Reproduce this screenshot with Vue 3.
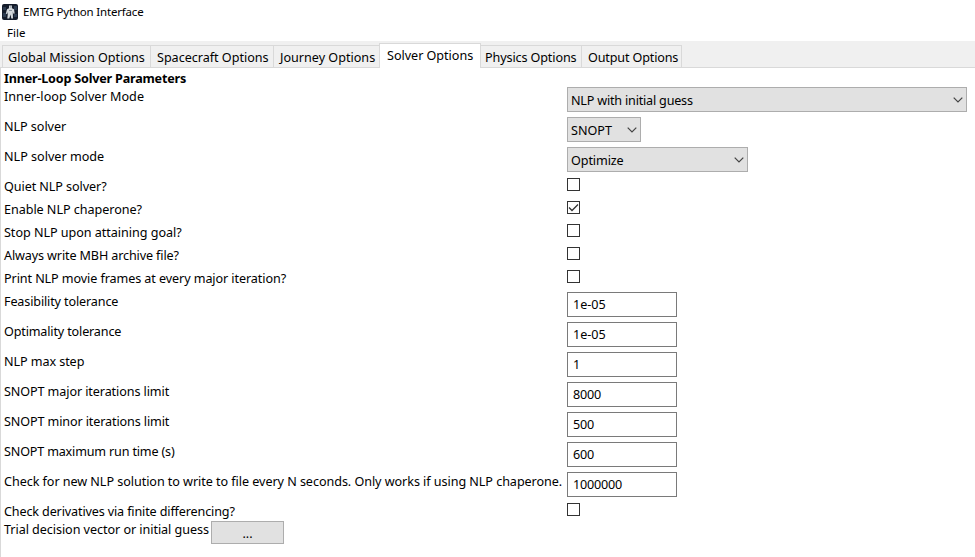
<script setup>
const tabs = [
  { name: 'Global Mission Options', w: 148, pad: 5, ls: 0 },
  { name: 'Spacecraft Options', w: 123, pad: 6, ls: -0.02 },
  { name: 'Journey Options', w: 106, pad: 6, ls: 0 },
  { name: 'Solver Options', w: 102, pad: 7, ls: -0.03, active: true },
  { name: 'Physics Options', w: 101, pad: 4, ls: -0.12 },
  { name: 'Output Options', w: 101, pad: 6, ls: -0.15 },
]
const rows = [
  { label: 'Inner-loop Solver Mode', ls: 0.03, type: 'select', value: 'NLP with initial guess', vls: -0.2, w: 400 },
  { label: 'NLP solver', ls: -0.05, type: 'select', value: 'SNOPT', w: 74 },
  { label: 'NLP solver mode', ls: 0, type: 'select', value: 'Optimize', vls: -0.1, w: 181 },
  { label: 'Quiet NLP solver?', ls: -0.08, type: 'check' },
  { label: 'Enable NLP chaperone?', ls: -0.05, type: 'check', value: true },
  { label: 'Stop NLP upon attaining goal?', ls: -0.04, type: 'check' },
  { label: 'Always write MBH archive file?', ls: -0.13, type: 'check' },
  { label: 'Print NLP movie frames at every major iteration?', ls: -0.09, type: 'check' },
  { label: 'Feasibility tolerance', ls: -0.14, type: 'input', value: '1e-05' },
  { label: 'Optimality tolerance', ls: -0.16, type: 'input', value: '1e-05' },
  { label: 'NLP max step', ls: -0.08, type: 'input', value: '1' },
  { label: 'SNOPT major iterations limit', ls: -0.1, type: 'input', value: '8000', vls: -0.2 },
  { label: 'SNOPT minor iterations limit', ls: -0.12, type: 'input', value: '500', vls: -0.2 },
  { label: 'SNOPT maximum run time (s)', ls: -0.18, type: 'input', value: '600', vls: -0.2 },
  { label: 'Check for new NLP solution to write to file every N seconds. Only works if using NLP chaperone.', ls: -0.056, type: 'input', value: '1000000', vls: -0.2 },
  { label: 'Check derivatives via finite differencing?', ls: -0.14, type: 'check', last: true },
]
const spacing = (v) => ({ letterSpacing: (v || 0) + 'px' })
</script>

<template>
  <div class="window">
    <header class="title">
      <svg class="logo" width="16" height="16" viewBox="0 0 16 16">
        <rect width="16" height="16" rx="2" fill="#141c2b" />
        <path d="M1 3h3v3H1zM12 2h3v4h-3zM1 9h3v4H1zM12 10h3v3h-3z" fill="#2c3b50" />
        <path d="M7 1.5h3v2.700l2 1 .7 4.300-1.300.300-.6-2.300.2 7H9.300L8.500 10.500 7.300 14.500H5.300L6 8 5 10.300 3.900 9.500 5 5.200 7 4.300z" fill="#d3d8dc" />
        <path d="M8 2.500h1.500v1H8zM7 6h3v1H7z" fill="#87919c" />
      </svg>
      <span>EMTG Python Interface</span>
    </header>
    <nav class="menu">File</nav>
    <div class="tabs">
      <div v-for="t in tabs" :key="t.name" class="tab" :class="{ active: t.active }" :style="{ width: t.w + 'px', paddingLeft: t.pad + 'px' }">
        <span :style="spacing(t.ls)">{{ t.name }}</span>
      </div>
    </div>
    <main class="page">
      <h1>Inner-Loop Solver Parameters</h1>
      <div v-for="r in rows" :key="r.label" class="row" :class="[r.type, { last: r.last }]">
        <div class="label"><span :style="spacing(r.ls)">{{ r.label }}</span></div>
        <div v-if="r.type === 'select'" class="combo" :style="{ width: r.w + 'px' }">
          <span class="choice" :style="spacing(r.vls)">{{ r.value }}</span>
          <svg width="10" height="6" viewBox="0 0 10 6"><path d="M.7.700 5 5 9.300.700" fill="none" stroke="#444" stroke-width="1.200" /></svg>
        </div>
        <div v-else-if="r.type === 'input'" class="field"><span :style="spacing(r.vls)">{{ r.value }}</span></div>
        <div v-else class="box">
          <svg v-if="r.value" width="11" height="11" viewBox="0 0 11 11"><path d="M1 5.500 4 8.500 10 2.500" fill="none" stroke="#333" stroke-width="1.300" /></svg>
        </div>
      </div>
      <div class="trial">
        <div class="label">Trial decision vector or initial guess</div>
        <div class="button">...</div>
      </div>
    </main>
  </div>
</template>

<style>
body { margin: 0; background: #fff; overflow: hidden; }
</style>

<style scoped>
* { box-sizing: border-box; }
.window { width: 975px; height: 557px; display: flex; flex-direction: column; font: 12.6px/18px "Noto Sans", sans-serif; color: #000; background: #fff; overflow: hidden; white-space: nowrap; }
.title { height: 24px; display: flex; align-items: center; padding-left: 2px; gap: 5px; font-size: 11.5px; letter-spacing: -0.18px; flex: none; }
.logo { margin-top: -1px; }
.menu { height: 17px; padding-left: 7px; font-size: 11.5px; flex: none; }
.tabs { height: 27px; flex: none; background: #f0f0f0; display: flex; align-items: flex-end; padding-left: 2px; box-shadow: inset 0 -1px #d9d9d9; }
.tab { height: 23px; border: 1px solid #d9d9d9; border-right: 0; padding-top: 3px; }
.tab:last-child { border-right: 1px solid #d9d9d9; }
.tab.active { height: 25px; background: #fff; border-bottom: 0; border-right: 1px solid #d9d9d9; margin-right: -1px; }
.page { flex: 1; border-left: 1px solid #d9d9d9; padding: 2px 0 0 3px; }
h1 { margin: 0; font-size: 12.6px; line-height: 17px; font-weight: 700; letter-spacing: -0.2px; }
.row { display: flex; height: 30px; }
.row.check { height: 23px; }
.row.last { height: 18px; }
.label { width: 563px; padding-top: 1px; flex: none; }
.combo { height: 25px; border: 1px solid #adadad; background: #e1e1e1; display: flex; align-items: center; justify-content: space-between; padding: 1px 3px 0 3px; }
.choice { padding-top: 2px; }
.field { width: 110px; height: 25px; border: 1px solid #7a7a7a; padding: 3px 5px; }
.box { width: 13px; height: 13px; border: 1px solid #333; margin-top: 1px; }
.box svg { display: block; }
.trial { display: flex; }
.trial .label { width: 207px; letter-spacing: -0.06px; }
.button { width: 73px; height: 23px; margin-top: 1px; border: 1px solid #adadad; background: #e1e1e1; text-align: center; line-height: 24px; }
</style>
